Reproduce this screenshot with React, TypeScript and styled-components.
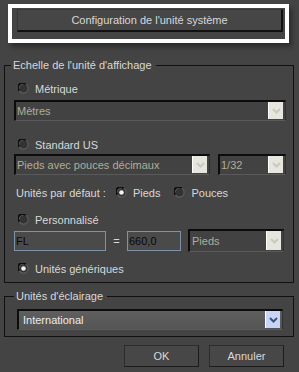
import React from 'react';
import styled, { createGlobalStyle } from 'styled-components';

const GlobalStyle = createGlobalStyle`
  html, body {
    margin: 0;
    padding: 0;
    background: #444444;
  }
  body {
    font-family: "Liberation Sans", Arial, sans-serif;
    font-size: 11px;
    color: #d8d8d8;
  }
`;

const Dialog = styled.div`
  width: 299px;
  height: 372px;
  box-sizing: border-box;
  background: #444444;
  display: flex;
  flex-direction: column;
  overflow: hidden;
`;

const HeaderFrame = styled.div`
  margin: 4px 0 0 8px;
  width: 281px;
  height: 39px;
  box-sizing: border-box;
  border: 4px solid #ffffff;
  padding: 1px 2px 0 5px;
  box-shadow: 3px 4px 5px rgba(0, 0, 0, 0.35);
`;

const HeaderButton = styled.div`
  height: 23px;
  box-sizing: border-box;
  border-top: 1px solid #383838;
  border-left: 1px solid #383838;
  border-right: 2px solid #111111;
  border-bottom: 2px solid #111111;
  background: #464646;
  display: flex;
  align-items: center;
  justify-content: center;
  color: #d8d8d8;
`;

const Group = styled.fieldset<{ $top: number; $padL: number; $padR: number; $padB: number }>`
  margin: ${({ $top }) => $top}px 5px 0 4px;
  width: 290px;
  box-sizing: border-box;
  border: 1px solid #111111;
  padding: 0 ${({ $padR }) => $padR}px ${({ $padB }) => $padB}px ${({ $padL }) => $padL}px;
  display: flex;
  flex-direction: column;
  min-width: 0;
`;

const Legend = styled.legend`
  padding: 0 4px 0 2px;
  margin-left: -3px;
  line-height: 14px;
  color: #d8d8d8;
`;

const RadioRow = styled.div<{ $top: number }>`
  display: flex;
  align-items: center;
  gap: 6px;
  height: 13px;
  margin-top: ${({ $top }) => $top}px;
  padding-left: 4px;
`;

const InlineRow = styled.div<{ $top: number }>`
  display: flex;
  align-items: center;
  height: 13px;
  margin-top: ${({ $top }) => $top}px;
  padding-left: 2px;
`;

const InlineLabel = styled.span`
  margin-right: 10px;
`;

const InlineOption = styled.span<{ $gap: number }>`
  display: flex;
  align-items: center;
  gap: 6px;
  margin-right: ${({ $gap }) => $gap}px;
`;

const Row = styled.div<{ $top: number; $gap: number }>`
  display: flex;
  align-items: center;
  gap: ${({ $gap }) => $gap}px;
  margin-top: ${({ $top }) => $top}px;
`;

const Dropdown = styled.div<{ $width?: number; $height?: number; $enabled?: boolean; $pad?: number }>`
  width: ${({ $width }) => ($width ? `${$width}px` : '100%')};
  height: ${({ $height }) => $height ?? 21}px;
  box-sizing: border-box;
  flex-shrink: 0;
  display: flex;
  align-items: center;
  border-top: 2px solid #0c0c0c;
  border-left: 2px solid #0c0c0c;
  border-bottom: 1px solid #5a5a5a;
  border-right: 1px solid #303030;
  padding-left: ${({ $pad }) => $pad ?? 1}px;
  background: ${({ $enabled }) =>
    $enabled ? 'linear-gradient(#5f5f5f, #555555)' : '#424242'};
  color: ${({ $enabled }) => ($enabled ? '#ececec' : '#aeae98')};
`;

const DropValue = styled.span`
  flex: 1;
  white-space: nowrap;
  overflow: hidden;
`;

const ArrowBox = styled.div<{ $enabled?: boolean }>`
  width: 15px;
  align-self: stretch;
  margin: 0 2px 1px 0;
  display: flex;
  align-items: center;
  justify-content: center;
  box-sizing: border-box;
  border-left: 1px solid #ffffff;
  background: ${({ $enabled }) => ($enabled ? '#c9d5f6' : '#e6e6de')};
`;

const TextInput = styled.div<{ $width: number }>`
  width: ${({ $width }) => $width}px;
  height: 20px;
  box-sizing: border-box;
  border: 1px solid #7d91a9;
  background: #4a4a4a;
  color: #080808;
  display: flex;
  align-items: center;
  padding-left: 1px;
  flex-shrink: 0;
`;

const Equals = styled.span`
  color: #d8d8d8;
  width: 7px;
  text-align: center;
`;

const ButtonBar = styled.div`
  display: flex;
  justify-content: flex-end;
  gap: 10px;
  margin-top: 8px;
  padding-right: 15px;
`;

const DialogButton = styled.div`
  width: 75px;
  height: 22px;
  box-sizing: border-box;
  border: 1px solid #1c1c1c;
  border-top-color: #2c2c2c;
  border-left-color: #2c2c2c;
  background: #474747;
  display: flex;
  align-items: center;
  justify-content: center;
  color: #d8d8d8;
`;

const Radio: React.FC<{ checked?: boolean }> = ({ checked }) => (
  <svg width="11" height="11" viewBox="0 0 11 11">
    <circle cx="5.5" cy="5.5" r="4.6" fill="#333333" stroke="#5c5c5c" strokeWidth="1.2" />
    <path d="M1.4 7.6 A4.3 4.3 0 0 1 7.6 1.4" fill="none" stroke="#0e0e0e" strokeWidth="2" />
    {checked && <circle cx="5.5" cy="5.5" r="2.3" fill="#f2f2f2" />}
  </svg>
);

const Chevron: React.FC<{ enabled?: boolean }> = ({ enabled }) => (
  <svg width="9" height="6" viewBox="0 0 9 6">
    <path
      d="M1 1 L4.5 4.5 L8 1"
      fill="none"
      stroke={enabled ? '#3e5280' : '#c9c9c1'}
      strokeWidth="2"
    />
  </svg>
);

const Select: React.FC<{ value: string; width?: number; height?: number; enabled?: boolean; pad?: number }> = ({
  value,
  width,
  height,
  enabled,
  pad,
}) => (
  <Dropdown $width={width} $height={height} $enabled={enabled} $pad={pad}>
    <DropValue>{value}</DropValue>
    <ArrowBox $enabled={enabled}>
      <Chevron enabled={enabled} />
    </ArrowBox>
  </Dropdown>
);

const App: React.FC = () => {
  return (
    <>
      <GlobalStyle />
      <Dialog>
        <HeaderFrame>
          <HeaderButton>Configuration de l'unité système</HeaderButton>
        </HeaderFrame>

        <Group $top={15} $padL={9} $padR={7} $padB={7}>
          <Legend>Echelle de l'unité d'affichage</Legend>

          <RadioRow $top={10}>
            <Radio />
            <span>Métrique</span>
          </RadioRow>
          <Row $top={5} $gap={0}>
            <Select value="Mètres" />
          </Row>

          <RadioRow $top={17}>
            <Radio />
            <span>Standard US</span>
          </RadioRow>
          <Row $top={3} $gap={8}>
            <Select value="Pieds avec pouces décimaux" width={196} />
            <Select value="1/32" width={68} />
          </Row>

          <InlineRow $top={11}>
            <InlineLabel>Unités par défaut :</InlineLabel>
            <InlineOption $gap={14}>
              <Radio checked />
              <span>Pieds</span>
            </InlineOption>
            <InlineOption $gap={0}>
              <Radio />
              <span>Pouces</span>
            </InlineOption>
          </InlineRow>

          <RadioRow $top={14}>
            <Radio />
            <span>Personnalisé</span>
          </RadioRow>
          <Row $top={3} $gap={7}>
            <TextInput $width={92}>FL</TextInput>
            <Equals>=</Equals>
            <TextInput $width={54}>660,0</TextInput>
            <Select value="Pieds" width={96} height={23} pad={2} />
          </Row>

          <RadioRow $top={10}>
            <Radio checked />
            <span>Unités génériques</span>
          </RadioRow>
        </Group>

        <Group $top={6} $padL={12} $padR={10} $padB={6}>
          <Legend>Unités d'éclairage</Legend>
          <Row $top={6} $gap={0}>
            <Select value="International" enabled pad={4} />
          </Row>
        </Group>

        <ButtonBar>
          <DialogButton>OK</DialogButton>
          <DialogButton>Annuler</DialogButton>
        </ButtonBar>
      </Dialog>
    </>
  );
};

export default App;
